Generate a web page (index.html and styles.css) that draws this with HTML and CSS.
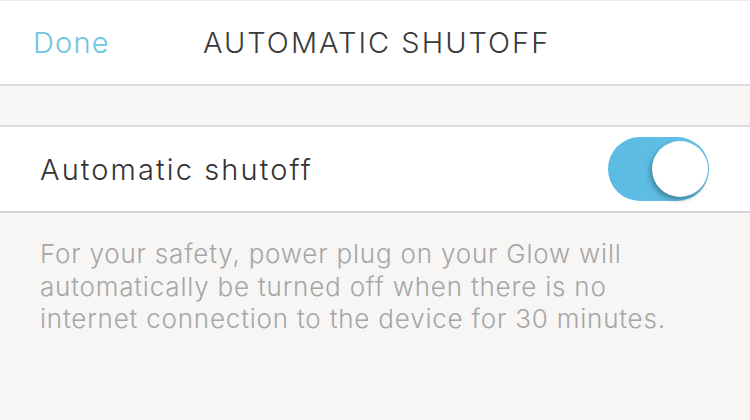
FILE: index.html
```html
<!DOCTYPE html>
<html lang="en">
<head>
  <meta charset="UTF-8">
  <title>Automatic shutoff</title>
  <link rel="stylesheet" href="styles.css">
</head>
<body>
  <div id="navbar">
    <a class="done" href="#">Done</a>
    <div class="title">AUTOMATIC SHUTOFF</div>
  </div>
  <div class="spacer"></div>
  <div class="row">
    <span class="label">Automatic shutoff</span>
    <label class="switch">
      <input type="checkbox" checked hidden>
      <span class="knob"></span>
    </label>
  </div>
  <div class="note">
    For your safety, power plug on your Glow will<br>
    automatically be turned off when there is no<br>
    internet connection to the device for 30 minutes.
  </div>
</body>
</html>
```
FILE: styles.css
```css
body {
    margin: 0;
    background: #f7f6f5;
    font-family: 'Inter', 'Roboto', sans-serif;
    font-weight: 300;
    color: #333;
    height: 420px;
    overflow: hidden;
}
#navbar {
    background: #fff;
    border-top: 1px solid #ebebeb;
    border-bottom: 2px solid #dcdcdc;
    display: flex;
    align-items: center;
    padding: 0 33px;
    box-sizing: border-box;
    height: 86px;
}
.done {
    color: #6cc6e2;
    text-decoration: none;
    font-size: 29px;
    letter-spacing: 1.2px;
    width: 170px;
}
.title {
    font-size: 29px;
    letter-spacing: 2px;
    color: #3a3a3a;
}
.spacer {
    height: 39px;
}
.row {
    background: #fff;
    border-top: 2px solid #dcdcdc;
    border-bottom: 2px solid #d4d4d4;
    height: 84px;
    display: flex;
    align-items: center;
    justify-content: space-between;
    padding: 0 40px;
}
.label {
    font-size: 29px;
    letter-spacing: 2.1px;
    color: #333;
}
.switch {
    position: relative;
    width: 101px;
    height: 64px;
    border-radius: 32px;
    background: linear-gradient(90deg, #5bbbe2, #62c0e5);
    margin-right: 1px;
}
.knob {
    position: absolute;
    right: 1px;
    top: 4px;
    width: 56px;
    height: 56px;
    border-radius: 50%;
    background: #fff;
    box-shadow: -2px 3px 5px rgba(0, 0, 0, 0.3);
}
.note {
    padding: 25px 40px;
    font-size: 26px;
    line-height: 32.5px;
    letter-spacing: 0.8px;
    white-space: nowrap;
    color: #a6a6a6;
}
```
